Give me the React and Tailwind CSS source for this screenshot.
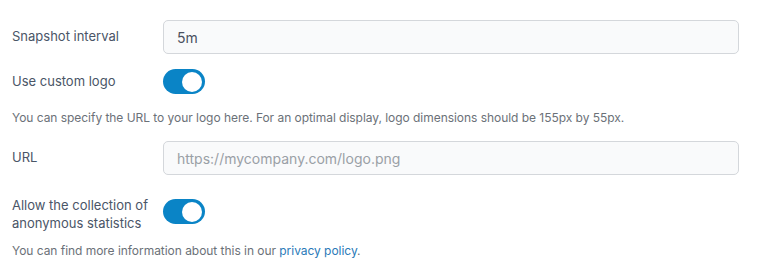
import React, { useState } from 'react';

const Toggle = ({ checked, onChange, className = '' }) => (
    <button
        type="button"
        onClick={() => onChange(!checked)}
        className={`relative inline-flex h-[25px] w-[42px] shrink-0 items-center rounded-full transition-colors ${checked ? 'bg-[#0a84c6]' : 'bg-gray-300'} ${className}`}
    >
        <span
            className={`inline-block h-[20px] w-[20px] rounded-full bg-white transition-transform ${checked ? 'translate-x-[19px]' : 'translate-x-[3px]'}`}
        />
    </button>
);

const App = () => {
    const [interval, setInterval] = useState('5m');
    const [customLogo, setCustomLogo] = useState(true);
    const [url, setUrl] = useState('');
    const [stats, setStats] = useState(true);

    return (
        <div className="min-h-screen bg-white pl-3 pr-[18px] pt-5 font-['Inter',sans-serif] text-[13px] text-[#4a5567]">
            <div className="flex items-center">
                <label className="w-[151px] shrink-0 pr-3">Snapshot interval</label>
                <input
                    type="text"
                    value={interval}
                    onChange={(e) => setInterval(e.target.value)}
                    className="h-[34px] flex-1 rounded-[5px] border border-[#d4d7db] bg-[#f9fafb] px-[13px] text-[14px] text-[#4a5160] focus:outline-none"
                />
            </div>

            <div className="mt-[15px] flex items-center">
                <label className="w-[151px] shrink-0 pr-3">Use custom logo</label>
                <Toggle checked={customLogo} onChange={setCustomLogo} />
            </div>

            <p className="mt-4 text-[12px] leading-4 tracking-[-0.04px] text-[#6b7178]">
                You can specify the URL to your logo here. For an optimal display, logo dimensions should be 155px by 55px.
            </p>

            <div className="mt-[15px] flex items-center">
                <label className="w-[151px] shrink-0 pr-3">URL</label>
                <input
                    type="text"
                    value={url}
                    onChange={(e) => setUrl(e.target.value)}
                    placeholder="https://mycompany.com/logo.png"
                    className="h-[34px] flex-1 rounded-[5px] border border-[#d4d7db] bg-[#f9fafb] px-[13px] text-[14px] text-[#4a5160] placeholder-[#9aa0a6] focus:outline-none"
                />
            </div>

            <div className="mt-[21px] flex items-start">
                <label className="w-[151px] shrink-0 pr-3 leading-[18px]">Allow the collection of anonymous statistics</label>
                <Toggle checked={stats} onChange={setStats} className="mt-[3px]" />
            </div>

            <p className="mt-[11px] text-[12px] leading-4 tracking-[-0.04px] text-[#6b7178]">
                You can find more information about this in our{' '}
                <a href="#" className="text-[#2a7ab8]">privacy policy</a>.
            </p>
        </div>
    );
};

export default App;
